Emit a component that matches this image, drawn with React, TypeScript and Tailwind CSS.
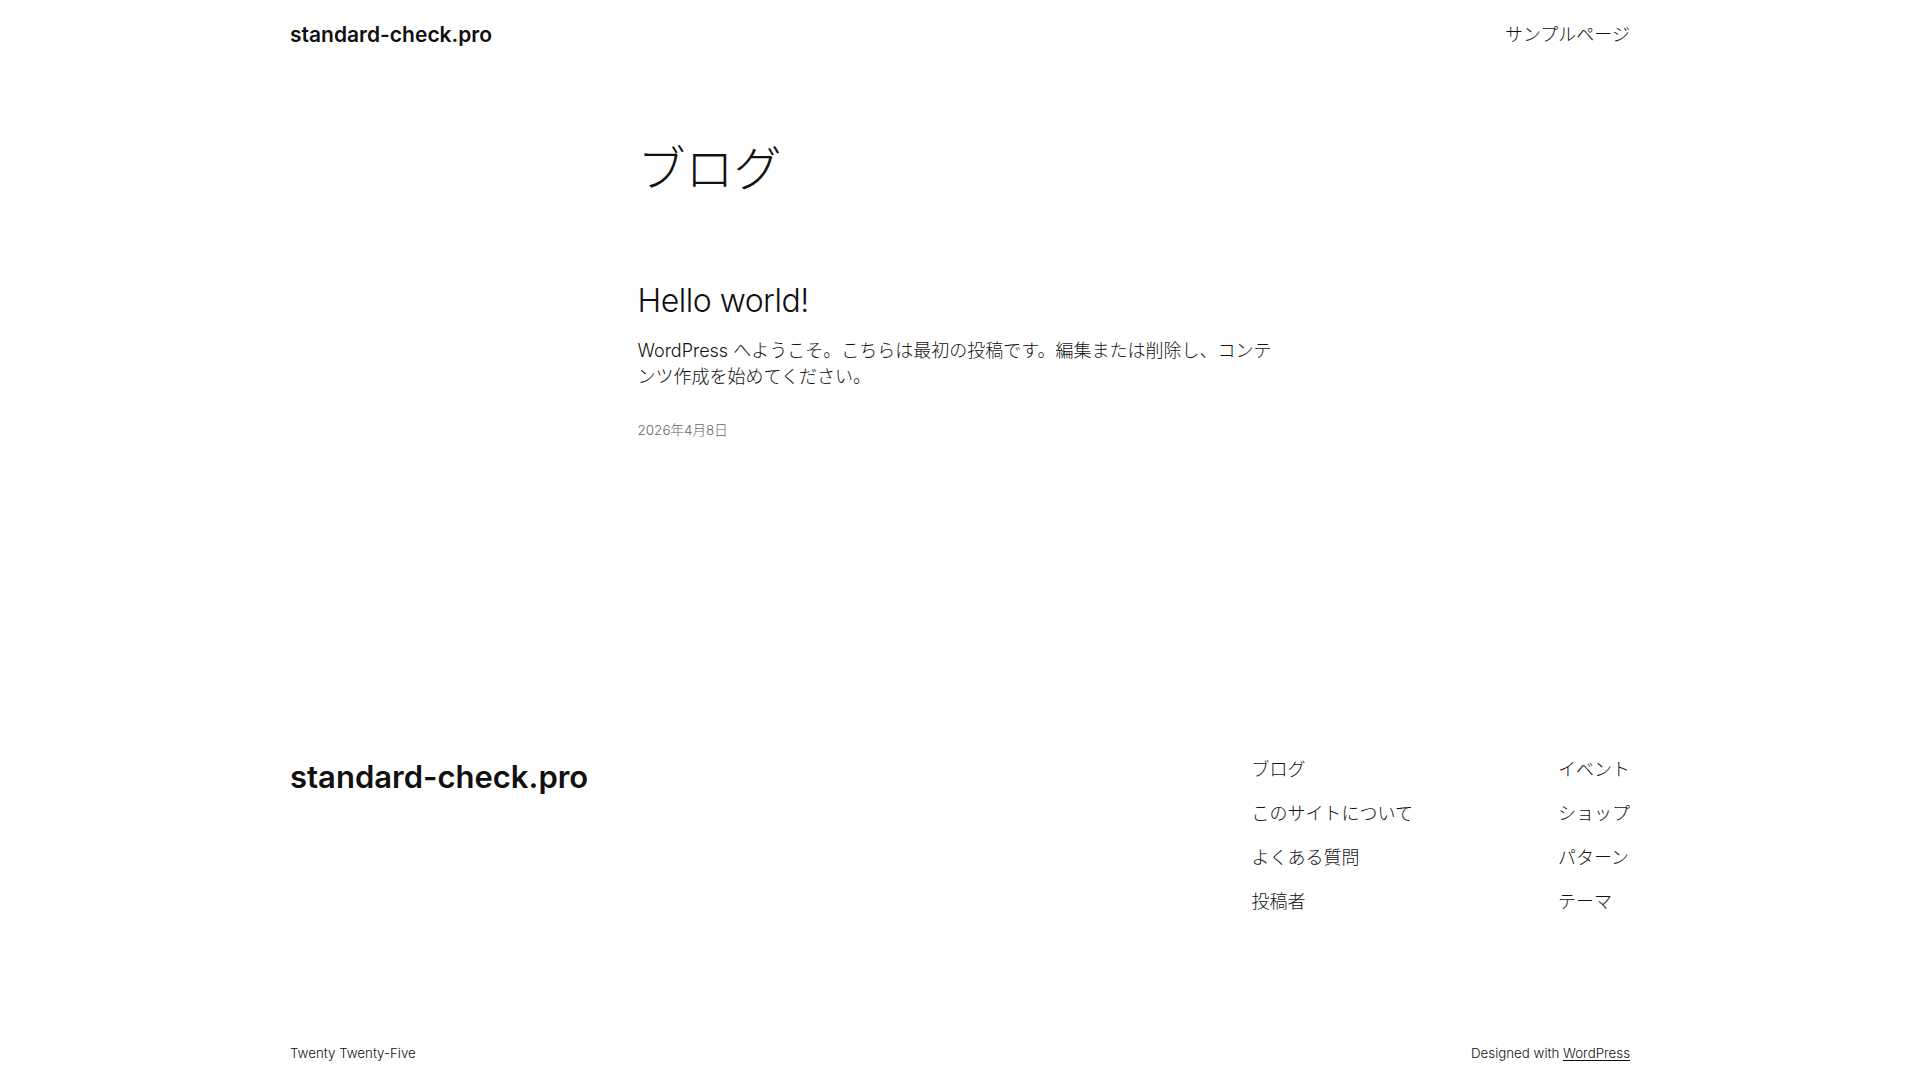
const font = "font-['Inter','Noto_Sans_CJK_JP',sans-serif]";

const footerCols = [
  ["ブログ", "このサイトについて", "よくある質問", "投稿者"],
  ["イベント", "ショップ", "パターン", "テーマ"],
];

export default function App() {
  return (
    <div className={`${font} min-h-[1080px] bg-white text-[#111111]`}>
      {/* Header */}
      <header className="mx-auto flex h-[69px] w-[1340px] items-center justify-between">
        <a className="text-[21px] font-semibold">standard-check.pro</a>
        <nav className="text-[18px] font-light">サンプルページ</nav>
      </header>

      {/* Blog list */}
      <main className="mx-auto w-[645px] pt-[71px]">
        <h1 className="text-[48px] font-light leading-[1.2]">ブログ</h1>
        <article className="mt-[84px]">
          <h2 className="text-[32px] font-light leading-[1.2] tracking-[-0.5px]">Hello world!</h2>
          <p className="mt-[18px] text-[18px] font-light leading-[26px]">
            WordPress へようこそ。こちらは最初の投稿です。編集または削除し、コンテンツ作成を始めてください。
          </p>
          <p className="mt-[30px] text-[13.5px] font-light leading-[20px] text-[#666666]">2026年4月8日</p>
        </article>
      </main>

      {/* Footer */}
      <footer className="mx-auto w-[1340px] pt-[317px]">
        <div className="flex items-start justify-between">
          <a className="mt-[2px] text-[31px] font-semibold leading-[36px]">standard-check.pro</a>
          <div className="flex gap-[145px]">
            {footerCols.map((col, i) => (
              <ul key={i} className="flex flex-col gap-[18px] text-[18px] font-light leading-[26px]">
                {col.map((item) => (
                  <li key={item}>{item}</li>
                ))}
              </ul>
            ))}
          </div>
        </div>
        <div className="mt-[128px] flex items-center justify-between text-[13.3px] font-light leading-[20px]">
          <span>Twenty Twenty-Five</span>
          <span>
            Designed with <a className="underline underline-offset-2">WordPress</a>
          </span>
        </div>
      </footer>
    </div>
  );
}
